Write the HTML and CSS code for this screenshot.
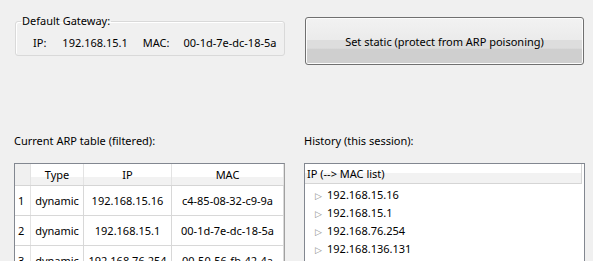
FILE: index.html
```html
<!DOCTYPE html>
<html lang="en">
<head>
<meta charset="UTF-8">
<title>ARP Monitor</title>
<link rel="stylesheet" href="styles.css">
</head>
<body>
<div class="window">
  <div class="top-row">
    <fieldset class="gateway">
      <legend>Default Gateway:</legend>
      <div class="gateway-info">
        <span class="label">IP:</span>
        <span class="value ip">192.168.15.1</span>
        <span class="label mac-label">MAC:</span>
        <span class="value mac">00-1d-7e-dc-18-5a</span>
      </div>
    </fieldset>
    <button class="static-button">Set static (protect from ARP poisoning)</button>
  </div>

  <div class="bottom-row">
    <div class="panel arp-panel">
      <div class="panel-title">Current ARP table (filtered):</div>
      <div class="table-frame">
        <table class="arp-table">
          <thead>
            <tr>
              <th class="corner"></th>
              <th class="col-type">Type</th>
              <th class="col-ip">IP</th>
              <th class="col-mac">MAC</th>
            </tr>
          </thead>
          <tbody>
            <tr>
              <th class="row-num">1</th>
              <td>dynamic</td>
              <td>192.168.15.16</td>
              <td>c4-85-08-32-c9-9a</td>
            </tr>
            <tr>
              <th class="row-num">2</th>
              <td>dynamic</td>
              <td>192.168.15.1</td>
              <td>00-1d-7e-dc-18-5a</td>
            </tr>
            <tr>
              <th class="row-num">3</th>
              <td>dynamic</td>
              <td>192.168.76.254</td>
              <td>00-50-56-fb-42-4a</td>
            </tr>
          </tbody>
        </table>
      </div>
    </div>

    <div class="panel history-panel">
      <div class="panel-title">History (this session):</div>
      <div class="tree-frame">
        <div class="tree-header">IP (--&gt; MAC list)</div>
        <ul class="tree">
          <li><span class="arrow">&#9655;</span>192.168.15.16</li>
          <li><span class="arrow">&#9655;</span>192.168.15.1</li>
          <li><span class="arrow">&#9655;</span>192.168.76.254</li>
          <li><span class="arrow">&#9655;</span>192.168.136.131</li>
          <li><span class="arrow">&#9655;</span>192.168.136.254</li>
        </ul>
      </div>
    </div>
  </div>
</div>
</body>
</html>
```

FILE: styles.css
```css
body {
  margin: 0;
  padding: 0;
  background-color: #f0f0f0;
  font-family: "Noto Sans", "Open Sans", sans-serif;
  font-size: 11px;
  color: #000;
  overflow: hidden;
}
.window {
  height: 261px;
  overflow: hidden;
}

/* Top area: gateway box + button */
.top-row {
  display: flex;
  align-items: flex-start;
  padding: 13px 0 0 15px;
}
.gateway {
  flex: none;
  width: 270px;
  min-width: 0;
  height: 43px;
  box-sizing: border-box;
  margin: 0;
  padding: 0;
  border: 1px solid #d9d9d9;
  border-radius: 3px;
  box-shadow: inset 1px 1px 0 #fff;
}
.gateway legend {
  padding: 0 1px;
  margin-left: 5px;
  line-height: 16px;
}
.gateway-info {
  display: flex;
  white-space: nowrap;
  padding: 6px 0 0 17px;
  line-height: 16px;
}
.gateway-info .ip {
  margin-left: 16px;
}
.gateway-info .mac-label {
  margin-left: 15px;
}
.gateway-info .mac {
  margin-left: 14px;
}
.static-button {
  flex: none;
  width: 279px;
  height: 48px;
  margin: 4px 0 0 20px;
  padding: 0;
  font-family: inherit;
  font-size: 11px;
  color: #000;
  border: 1px solid #707070;
  border-radius: 3px;
  background: linear-gradient(#f2f2f2 0, #ebebeb 47%, #dddddd 48%, #dddddd 66%, #cfcfcf 67%, #cfcfcf 100%);
  box-shadow: inset 0 0 0 1px #fcfcfc;
}

/* Bottom area: ARP table + history */
.bottom-row {
  display: flex;
  padding: 68px 0 0 14px;
}
.panel-title {
  line-height: 16px;
  margin-bottom: 14px;
}
.arp-panel {
  flex: none;
  width: 271px;
}
.history-panel {
  flex: none;
  width: 281px;
  margin-left: 19px;
}
.table-frame {
  height: 200px;
  border: 1px solid #828790;
  border-right-color: #a0a0a0;
  background: #fff;
  overflow: hidden;
}
.arp-table {
  border-collapse: collapse;
  table-layout: fixed;
  width: 269px;
}
.arp-table th,
.arp-table td {
  padding: 0;
  font-weight: normal;
  text-align: center;
  white-space: nowrap;
}
.arp-table thead th {
  height: 21px;
  border-right: 1px solid #e3e3e3;
  border-bottom: 1px solid #d5d5d5;
  background: linear-gradient(#fff 0, #fff 60%, #f2f2f2 60%, #f2f2f2 100%);
}
.arp-table thead th.corner {
  width: 15px;
  background: #f0f0f0;
}
.arp-table .col-type { width: 52px; }
.arp-table .col-ip { width: 87px; }
.arp-table .row-num {
  text-align: left;
  padding-left: 3px;
  border-right: 1px solid #e3e3e3;
  border-bottom: 1px solid #d5d5d5;
  background: #fff;
}
.arp-table td {
  height: 29px;
  border-right: 1px solid #d8d8d8;
  border-bottom: 1px solid #d8d8d8;
}

.tree-frame {
  height: 200px;
  border: 1px solid #828790;
  background: #fff;
  overflow: hidden;
}
.tree-header {
  height: 19px;
  line-height: 19px;
  padding-left: 2px;
  margin-right: 2px;
  border-bottom: 1px solid #d5d5d5;
  border-right: 1px solid #d5d5d5;
  background: linear-gradient(#fff 0, #fff 45%, #f2f2f2 45%, #f2f2f2 100%);
}
.tree {
  list-style: none;
  margin: 0;
  padding: 2px 0 0 10px;
}
.tree li {
  height: 18px;
  line-height: 18px;
}
.tree .arrow {
  display: inline-block;
  width: 12px;
  font-size: 9px;
  color: #8c8c8c;
}
```
